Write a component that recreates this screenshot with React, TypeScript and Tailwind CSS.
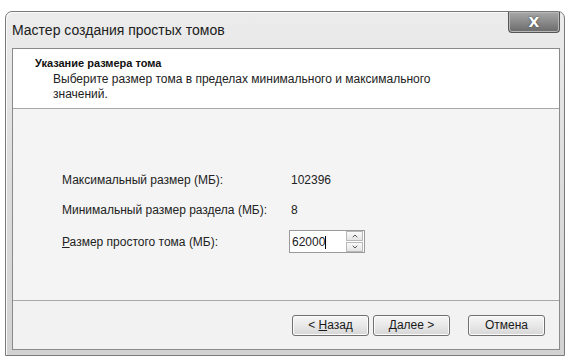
import { ChevronUp, ChevronDown } from 'lucide-react';

const font = { fontFamily: '"Liberation Sans", Arial, sans-serif' };

function WizButton({ children }: { children: React.ReactNode }) {
  return (
    <button className="w-[77px] h-[21px] rounded-[3px] border border-[#707070] bg-gradient-to-b from-[#f6f6f6] via-[#e8e8e8] to-[#d6d6d6] text-[12px] text-[#1a1a1a] leading-none flex items-center justify-center shadow-[inset_0_0_0_1px_#fbfbfb]">
      {children}
    </button>
  );
}

export default function App() {
  return (
    <div className="w-[575px] h-[363px] bg-white overflow-hidden pt-[11px] pl-[5px]" style={font}>
      {/* window frame */}
      <div className="relative w-[560px] h-[345px] rounded-t-[7px] border border-[#7a7a7a] bg-gradient-to-b from-[#ececec] via-[#dcdcdc] to-[#d2d2d2] shadow-[inset_1px_1px_0_#fafafa]">
        <div className="h-[36px] flex items-center pl-[6px] text-[14px] text-[#202020]">
          Мастер создания простых томов
        </div>
        <div className="absolute right-[4px] top-0 w-[52px] h-[21px] rounded-b-[4px] border border-[#555] border-t-0 bg-gradient-to-b from-[#a8a8a8] via-[#8a8a8a] to-[#6a6a6a] flex items-center justify-center shadow-[inset_0_0_0_1px_#b8b8b8]">
          <span className="text-white font-bold text-[14px] leading-none [text-shadow:0_0_2px_#333]" style={{ fontFamily: '"DejaVu Sans", sans-serif' }}>X</span>
        </div>

        {/* inner panel */}
        <div className="ml-[6px] mr-[4px] h-[302px] border border-[#8a8a8a] flex flex-col bg-[#f4f4f4]">
          <div className="h-[60px] bg-white border-b border-[#a8a8a8] pt-[7px] pl-[22px]">
            <div className="text-[11px] font-bold text-[#111] leading-[14px]">Указание размера тома</div>
            <div className="pl-[18px] pt-[2px] text-[12px] text-[#222] leading-[15px] w-[440px]">
              Выберите размер тома в пределах минимального и максимального значений.
            </div>
          </div>

          <div className="flex-1 pt-[62px] pl-[49px] text-[12px] text-[#222]">
            <div className="flex items-center h-[18px]">
              <span className="w-[229px]">Максимальный размер (МБ):</span>
              <span>102396</span>
            </div>
            <div className="flex items-center h-[18px] mt-[12px]">
              <span className="w-[229px]">Минимальный размер раздела (МБ):</span>
              <span>8</span>
            </div>
            <div className="flex items-center h-[23px] mt-[11px]">
              <span className="w-[227px]">
                <span className="underline">Р</span>азмер простого тома (МБ):
              </span>
              <div className="w-[76px] h-[23px] border border-[#9a9a9a] bg-white flex items-center pl-[2px] pr-[1px]">
                <span className="flex-1">
                  62000<span className="inline-block w-px h-[13px] bg-black align-middle" />
                </span>
                <div className="flex flex-col gap-px">
                  <div className="w-[17px] h-[10px] border border-[#b8b8b8] bg-gradient-to-b from-[#fafafa] to-[#e4e4e4] flex items-center justify-center">
                    <ChevronUp size={8} strokeWidth={3} color="#555" />
                  </div>
                  <div className="w-[17px] h-[10px] border border-[#b8b8b8] bg-gradient-to-b from-[#fafafa] to-[#e4e4e4] flex items-center justify-center">
                    <ChevronDown size={8} strokeWidth={3} color="#555" />
                  </div>
                </div>
              </div>
            </div>
          </div>

          <div className="h-[49px] border-t border-[#a8a8a8] flex items-center pl-[279px] bg-[#f2f2f2]">
            <WizButton>
              &lt;&nbsp;<span className="underline">Н</span>азад
            </WizButton>
            <div className="ml-[4px]">
              <WizButton>Далее &gt;</WizButton>
            </div>
            <div className="ml-[18px]">
              <WizButton>Отмена</WizButton>
            </div>
          </div>
        </div>
      </div>
    </div>
  );
}
